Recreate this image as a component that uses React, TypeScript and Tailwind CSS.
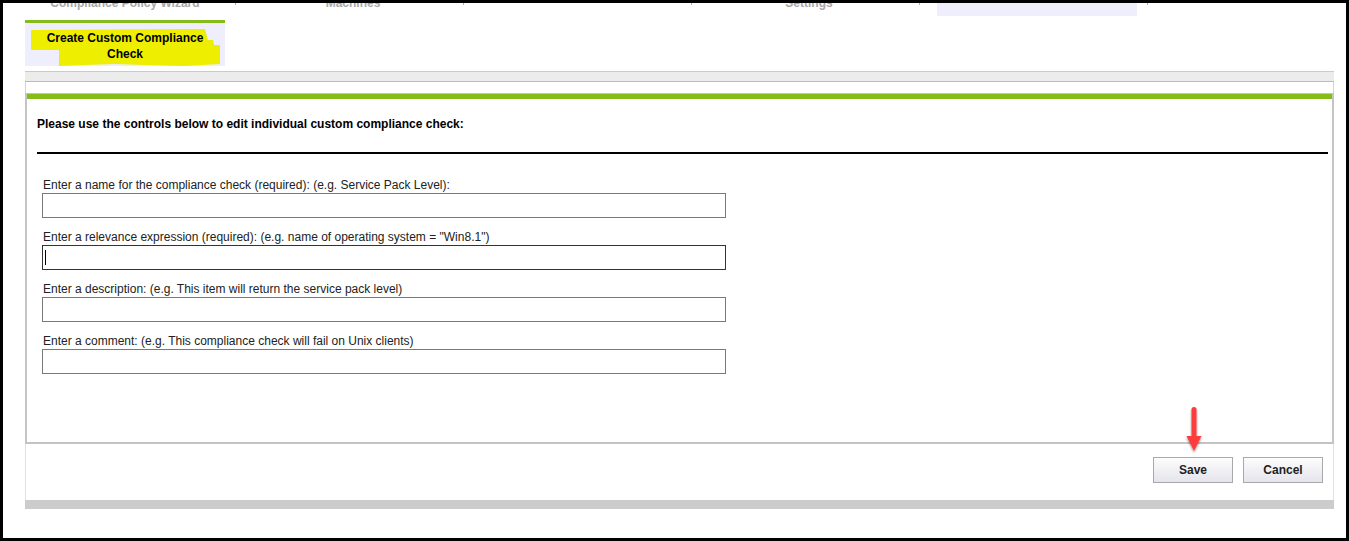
import React from 'react';

const steps = [
  { label: 'Compliance Policy Wizard', active: false },
  { label: 'Machines', active: false },
  { label: '', active: false },
  { label: 'Settings', active: false },
  { label: '', active: true },
];

const fields = [
  { label: 'Enter a name for the compliance check (required): (e.g. Service Pack Level):', focused: false },
  { label: 'Enter a relevance expression (required): (e.g. name of operating system = "Win8.1")', focused: true },
  { label: 'Enter a description: (e.g. This item will return the service pack level)', focused: false },
  { label: 'Enter a comment: (e.g. This compliance check will fail on Unix clients)', focused: false },
];

function StepStrip() {
  return (
    <div className="flex h-[13px] overflow-hidden pl-[22px]">
      {steps.map((s, i) => (
        <div key={i} className="flex">
          <div
            className={`w-[200px] h-[13px] text-center overflow-hidden ${s.active ? 'bg-[#eeeefc]' : ''}`}
          >
            <div className="mt-[-7px] text-[12px] leading-[14px] font-bold text-[#a8a8a8]">{s.label}</div>
          </div>
          <div className="w-[28px] pl-[10px]">
            <div className="w-px h-[2px] bg-[#b0b0b0]" />
          </div>
        </div>
      ))}
    </div>
  );
}

function FieldRow({ label, focused }: { label: string; focused: boolean }) {
  return (
    <div className="mb-[12px]">
      <div className="text-[12px] leading-[14px] text-[#222] mb-px pl-px">{label}</div>
      <div
        className={`w-[684px] h-[25px] bg-white border flex items-center ${
          focused ? 'border-[#333]' : 'border-[#7a7a7a]'
        }`}
      >
        {focused && <div className="ml-[2px] w-px h-[15px] bg-black" />}
      </div>
    </div>
  );
}

function ActionButton({ children }: { children: React.ReactNode }) {
  return (
    <button className="w-[80px] h-[26px] border border-[#a9a9a9] bg-gradient-to-b from-[#fdfdfd] to-[#e4e4ec] text-[12px] font-bold text-[#222]">
      {children}
    </button>
  );
}

export default function App() {
  return (
    <div
      className="w-[1349px] h-[541px] border-[3px] border-black bg-white overflow-hidden"
      style={{ fontFamily: '"Liberation Sans", Arial, sans-serif' }}
    >
      <StepStrip />

      <div className="relative ml-[22px] w-[1309px]">
        {/* active tab */}
        <div className="relative mt-[4px] w-[200px] h-[46px] border-t-[3px] border-[#86bc1a] bg-[#eeeefc]">
          <svg className="absolute left-0 top-0" width="200" height="43" viewBox="0 0 200 43">
            <path
              d="M6,7 L180,6 L183,17 L188,17 L189,22 L195,22 L195,41 L160,43 L120,42 L90,41 L60,42 L34,43 L34,27 L6,27 Z"
              fill="#eeee00"
            />
          </svg>
          <div className="relative pt-[7px] text-center text-[12px] leading-[16px] font-bold text-black">
            Create Custom Compliance
            <br />
            Check
          </div>
        </div>

        {/* section bar */}
        <div className="mt-[5px] h-[11px] bg-[#ececec] border-t border-[#cacaca] border-b border-b-[#bababa]" />

        <div className="h-[11px] border-x border-[#d4d4d4]" />

        {/* editing panel */}
        <div className="border-x-2 border-b-2 border-t border-[#c4c4c4]">
          <div className="h-[5px] bg-[#86bc1a]" />
          <div className="pl-[10px] pr-[4px] pt-[17px]">
            <div className="text-[12px] leading-[16px] font-bold text-black">
              Please use the controls below to edit individual custom compliance check:
            </div>
            <div className="mt-[20px] h-[2px] bg-black" />
          </div>
          <div className="pl-[15px] pt-[24px] pb-[56px]">
            {fields.map((f, i) => (
              <FieldRow key={i} label={f.label} focused={f.focused} />
            ))}
          </div>
        </div>

        {/* footer */}
        <div className="border-x border-[#e2e2e2] pt-[13px] pb-[17px] pr-[10px] flex justify-end gap-[10px]">
          <ActionButton>Save</ActionButton>
          <ActionButton>Cancel</ActionButton>
        </div>
        <div className="h-[9px] bg-[#cccccc]" />

        {/* annotation arrow */}
        <svg className="absolute left-[1157px] top-[385px]" width="24" height="50" viewBox="0 0 24 50">
          <defs>
            <filter id="sh" x="-50%" y="-20%" width="200%" height="150%">
              <feDropShadow dx="0" dy="1.5" stdDeviation="1.2" floodColor="#000" floodOpacity="0.45" />
            </filter>
          </defs>
          <g filter="url(#sh)">
            <rect x="9.5" y="2" width="5" height="32" rx="2.5" fill="#fd3d3d" />
            <path d="M4.5,31 L19.5,31 L12,46 Z" fill="#fd3d3d" />
          </g>
        </svg>
      </div>
    </div>
  );
}
